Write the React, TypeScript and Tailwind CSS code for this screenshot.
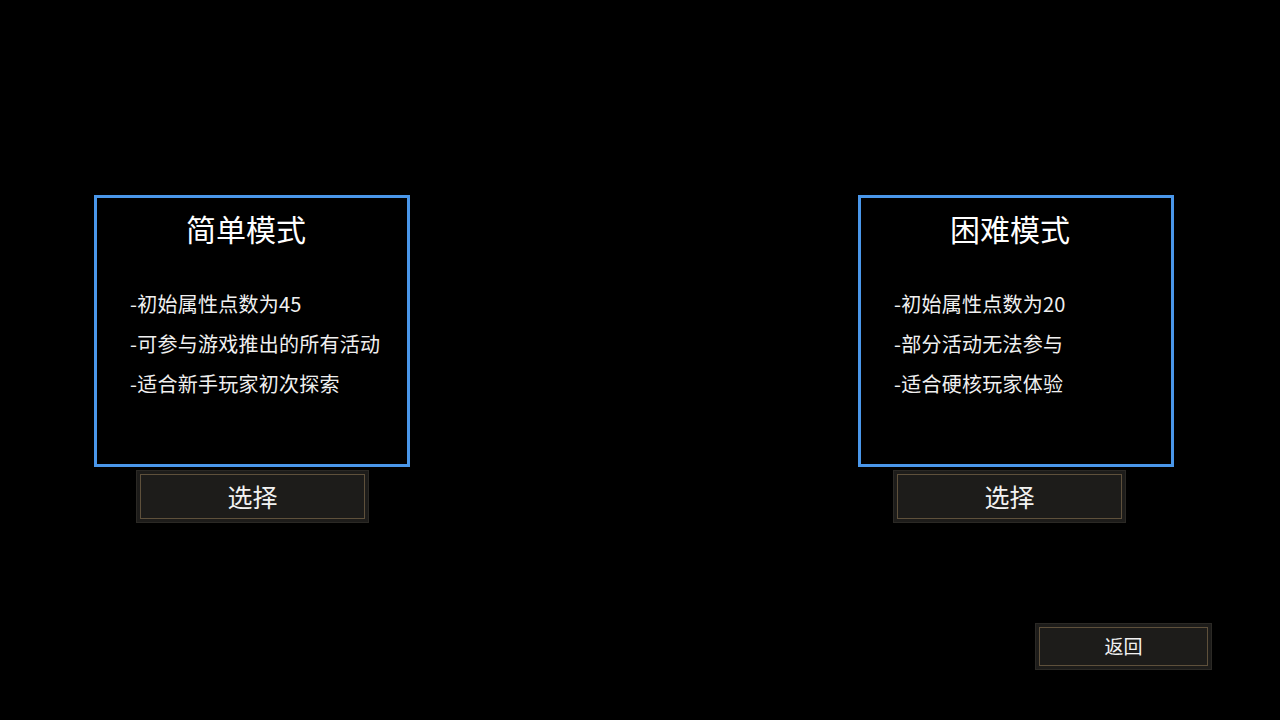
const modes = [
  {
    title: '简单模式',
    lines: ['-初始属性点数为45', '-可参与游戏推出的所有活动', '-适合新手玩家初次探索'],
    btnOffset: 'ml-[42px]',
  },
  {
    title: '困难模式',
    lines: ['-初始属性点数为20', '-部分活动无法参与', '-适合硬核玩家体验'],
    btnOffset: 'ml-[35px]',
  },
];

function StoneButton({ label, className, size }: { label: string; className?: string; size: string }) {
  return (
    <button
      className={`flex p-[4px] bg-[#1d1c1a] shadow-[inset_0_0_0_1px_#2b2925] ${className ?? ''}`}
    >
      <span
        className={`flex-1 flex items-center justify-center border border-[#5e503b] bg-[radial-gradient(ellipse_at_20%_50%,#2a2620_0%,transparent_45%),radial-gradient(ellipse_at_85%_60%,#2c261d_0%,transparent_40%),#1a1917] text-[#f2f2f2] ${size}`}
      >
        {label}
      </span>
    </button>
  );
}

export default function App() {
  return (
    <div
      className="w-[1280px] h-[720px] bg-black flex flex-col pt-[195px] overflow-hidden"
      style={{ fontFamily: '"Noto Sans CJK SC", "Noto Sans", sans-serif' }}
    >
      <div className="flex pl-[94px] gap-[448px]">
        {modes.map((m) => (
          <div key={m.title} className="flex flex-col">
            <div className="w-[316px] h-[272px] border-[3px] border-[#4a97ea] flex flex-col pt-[12px]">
              <h2 className="text-center pr-[12px] text-[30px] leading-[36px] text-white">{m.title}</h2>
              <ul className="mt-[38px] pl-[33px] text-[20px] leading-[40px] tracking-[0.25px] text-[#f0f0f0]">
                {m.lines.map((l) => (
                  <li key={l}>{l}</li>
                ))}
              </ul>
            </div>
            <StoneButton
              label="选择"
              className={`mt-[3px] w-[233px] h-[53px] ${m.btnOffset}`}
              size="text-[25px]"
            />
          </div>
        ))}
      </div>
      <div className="flex justify-end pr-[68px] mt-[100px]">
        <StoneButton label="返回" className="w-[177px] h-[47px]" size="text-[19px]" />
      </div>
    </div>
  );
}
